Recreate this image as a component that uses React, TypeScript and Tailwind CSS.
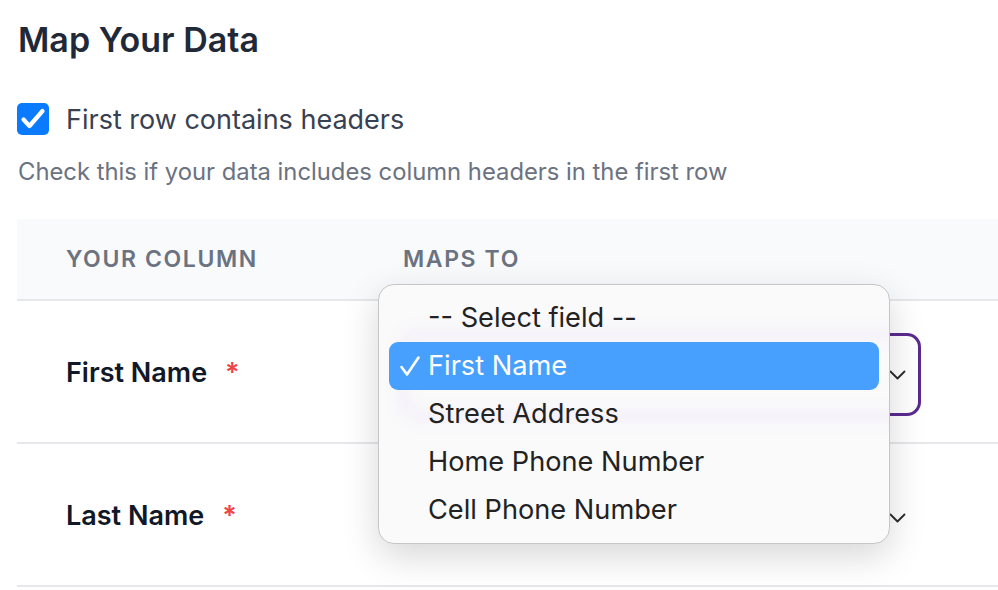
import React from "react";

function Chevron() {
  return (
    <svg width="17" height="10" viewBox="0 0 17 10" fill="none">
      <polyline points="1.5,1.5 8.5,8.5 15.5,1.5" stroke="#2b2b2b" strokeWidth="1.8" strokeLinecap="round" strokeLinejoin="round" />
    </svg>
  );
}

export default function App() {
  const options = ["-- Select field --", "First Name", "Street Address", "Home Phone Number", "Cell Phone Number"];
  return (
    <div className="relative h-[590px] w-[998px] overflow-hidden bg-white font-['Inter','Noto_Sans',sans-serif]">
      <div className="pl-[18px]">
        <h1 className="mt-[20px] text-[34px] font-semibold leading-[40px] text-[#1f2937]">Map Your Data</h1>
        <div className="mt-[44px] flex h-[32px] items-center">
          <div className="flex h-[32px] w-[32px] items-center justify-center rounded-[5px] bg-[#0a7bff] -ml-px -mt-[2px]">
            <svg width="32" height="32" viewBox="0 0 32 32" fill="none">
              <path d="M6.5 16.5 L12.5 23 L25.5 8" stroke="white" strokeWidth="4.2" strokeLinecap="round" strokeLinejoin="round" />
            </svg>
          </div>
          <span className="ml-[17px] text-[27px] leading-[32px] text-[#374151]">First row contains headers</span>
        </div>
        <p className="mt-[21px] text-[23.8px] leading-[30px] text-[#6b7280]">Check this if your data includes column headers in the first row</p>
      </div>

      <div className="ml-[17px] mt-[32px]">
        <div className="flex h-[82px] items-center border-b-2 border-[#e5e7eb] bg-[#f9fafb] text-[23px] font-semibold uppercase tracking-[0.07em] text-[#6b7280]">
          <div className="w-[338px] pl-[49px]">Your Column</div>
          <div className="pl-[48px]">Maps To</div>
        </div>
        {["First Name", "Last Name"].map((label, i) => (
          <div key={label} className="flex h-[143px] items-center border-b-2 border-[#e5e7eb]">
            <div className="flex w-[338px] items-center pl-[49px] pt-[4px] text-[27px] font-semibold text-[#111827]">
              {label}
              <span className="ml-[18px] text-[#ef4444]">*</span>
            </div>
            <div className="pl-[48px]">
              <div
                className={
                  "mt-[6px] flex h-[83px] w-[518px] items-center justify-end rounded-[14px] pr-[12px] " +
                  (i === 0 ? "border-[3px] border-[#5b2a8f]" : "border-[3px] border-transparent")
                }
              >
                <Chevron />
              </div>
            </div>
          </div>
        ))}
      </div>

      <div className="absolute left-[378px] top-[284px] h-[260px] w-[512px] overflow-hidden rounded-[16px] border border-[#c6c6c6] bg-[#fafafa] shadow-[0_12px_36px_rgba(0,0,0,0.16)]">
        <div className="absolute left-[20px] top-[44px] h-[92px] w-[530px] rounded-[18px] border-[10px] border-[#7c3aed]/[0.06] blur-[8px]" />
        <div className="relative flex flex-col px-[10px] pt-[9px]">
          {options.map((o, i) => (
            <div
              key={o}
              className={
                "flex h-[48px] items-center rounded-[9px] text-[27.2px] " +
                (i === 1 ? "bg-[#48a0fe] text-white" : "text-[#222222]")
              }
            >
              <div className="flex w-[39px] justify-center pl-[2px]">
                {i === 1 && (
                  <svg width="22" height="22" viewBox="0 0 22 22" fill="none">
                    <path d="M2.5 12 L8 19.5 L19.5 2.5" stroke="white" strokeWidth="2.6" strokeLinecap="round" strokeLinejoin="round" />
                  </svg>
                )}
              </div>
              <span>{o}</span>
            </div>
          ))}
        </div>
      </div>
    </div>
  );
}
